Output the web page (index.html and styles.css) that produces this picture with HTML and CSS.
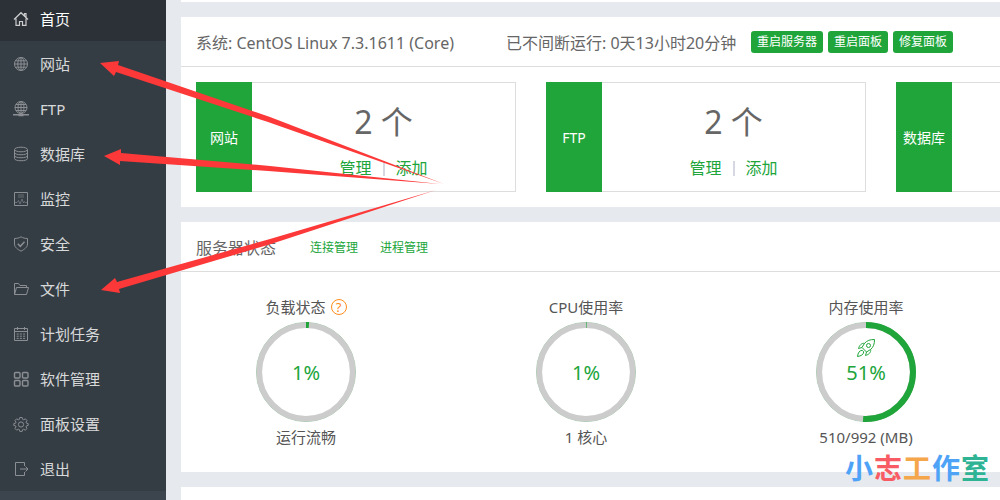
FILE: index.html
```html
<!DOCTYPE html>
<html lang="zh-CN">
<head>
  <meta charset="UTF-8">
  <meta name="viewport" content="width=device-width, initial-scale=1.0">
  <title>服务器面板</title>
  <link rel="stylesheet" href="styles.css">
</head>
<body>
  <aside class="sidebar">
    <nav class="menu">
      <a class="menu-item active" href="#">
        <svg class="icon" viewBox="0 0 16 16"><path d="M1 8.500L8 1.700l7 6.800M11.500 4.500V2.500H13V6M3 7.500v6.800h3.500V10.500h3v3.800H13V7.500"/></svg>
        首页
      </a>
      <a class="menu-item" href="#">
        <svg class="icon" viewBox="0 0 16 16"><circle cx="8" cy="8" r="6.500"/><ellipse cx="8" cy="8" rx="3.200" ry="6.500"/><path d="M8 1.500v13M1.500 8h13M2.500 4.800h11M2.500 11.200h11"/></svg>
        网站
      </a>
      <a class="menu-item" href="#">
        <svg class="icon" viewBox="0 0 16 16"><circle cx="8" cy="6.500" r="6"/><ellipse cx="8" cy="6.500" rx="3" ry="6"/><path d="M8 .5v13M2 6.500h12M3 3.500h10M3 9.500h10"/><path stroke-width="1.500" d="M0 13.700h16M5.500 14.500h5"/></svg>
        FTP
      </a>
      <a class="menu-item" href="#">
        <svg class="icon" viewBox="0 0 16 16"><ellipse cx="8" cy="3.500" rx="6.500" ry="2.300"/><path d="M1.500 3.500v9c0 3 13 3 13 0v-9M1.500 6.500c0 3 13 3 13 0M1.500 9.500c0 3 13 3 13 0"/></svg>
        数据库
      </a>
      <a class="menu-item" href="#">
        <svg class="icon" viewBox="0 0 16 16"><path d="M1.500 1.500h13v13h-13z"/><path opacity=".6" d="M5 4h6M5 6h6M2 11.500h2l1.500-2 1.500 3.500 2-5 1.500 4 1-1.500 1 1H14"/></svg>
        监控
      </a>
      <a class="menu-item" href="#">
        <svg class="icon" viewBox="0 0 16 16"><path d="M8 .8c2 1.200 4.200 1.700 6.500 1.700V8c0 3.500-3.500 5.500-6.500 7.200C5 13.500 1.500 11.500 1.500 8V2.500C3.800 2.500 6 2 8 .8z"/><path stroke-width="1.500" d="M4.800 7.800l2.500 2.500 4.200-4.500"/></svg>
        安全
      </a>
      <a class="menu-item" href="#">
        <svg class="icon" viewBox="0 0 16 16"><path d="M1.500 13.500v-11h4l1.500 2h6.500v2M1.500 13.500l2-7h12l-2 7z"/></svg>
        文件
      </a>
      <a class="menu-item" href="#">
        <svg class="icon" viewBox="0 0 16 16"><path d="M1.500 2.500h13v12h-13zM1.500 5.500h13M4.500 1v3M11.500 1v3"/><path stroke-dasharray="2 1.200" d="M3.700 8h9M3.700 10.200h9M3.700 12.400h9"/></svg>
        计划任务
      </a>
      <a class="menu-item" href="#">
        <svg class="icon" viewBox="0 0 16 16"><g stroke-width="1.400"><rect x="1.500" y="1.500" width="5.500" height="5.500" rx="1"/><rect x="9.500" y="1.500" width="5.500" height="5.500" rx="1"/><rect x="1.500" y="9.500" width="5.500" height="5.500" rx="1"/><rect x="9.500" y="9.500" width="5.500" height="5.500" rx="1"/></g></svg>
        软件管理
      </a>
      <a class="menu-item" href="#">
        <svg class="icon" viewBox="0 0 16 16"><path d="M6.800 1.500h2.400l.4 1.800 1.100.5 1.600-1 1.700 1.700-1 1.600.5 1.100 1.700.4v1.800l-1.700.4-.5 1.100 1 1.600-1.700 1.700-1.600-1-1.100.5-.4 1.700H6.800l-.4-1.700-1.100-.5-1.600 1L2 12.500l1-1.600-.5-1.100-1.700-.4V7.600l1.700-.4L3 6.100l-1-1.600 1.700-1.700 1.600 1 1.100-.5z"/><circle cx="8" cy="8.500" r="2.600"/></svg>
        面板设置
      </a>
      <a class="menu-item" href="#">
        <svg class="icon" viewBox="0 0 16 16"><path d="M11.500 5V1.500h-9v13h9V11M7 8h8M12.500 5.500L15 8l-2.500 2.500"/></svg>
        退出
      </a>
    </nav>
  </aside>

  <main class="main">
    <section class="panel panel-top"></section>

    <section class="panel">
      <div class="panel-head">
        <span class="system">系统: CentOS Linux 7.3.1611 (Core)</span>
        <span class="uptime">已不间断运行: 0天13小时20分钟</span>
        <div class="actions">
          <button class="btn">重启服务器</button>
          <button class="btn">重启面板</button>
          <button class="btn">修复面板</button>
        </div>
      </div>
      <div class="cards">
        <div class="card">
          <div class="card-name">网站</div>
          <div class="card-body">
            <div class="count">2 个</div>
            <div class="links"><a href="#">管理</a><i class="divider"></i><a href="#">添加</a></div>
          </div>
        </div>
        <div class="card">
          <div class="card-name">FTP</div>
          <div class="card-body">
            <div class="count">2 个</div>
            <div class="links"><a href="#">管理</a><i class="divider"></i><a href="#">添加</a></div>
          </div>
        </div>
        <div class="card">
          <div class="card-name">数据库</div>
          <div class="card-body"></div>
        </div>
      </div>
    </section>

    <section class="panel">
      <div class="panel-head">
        <span class="status-title">服务器状态</span>
        <a class="head-link" href="#">连接管理</a>
        <a class="head-link" href="#">进程管理</a>
      </div>
      <div class="gauges">
        <div class="gauge">
          <div class="gauge-title">负载状态 <span class="help">?</span></div>
          <div class="ring">
            <svg viewBox="0 0 100 100">
              <circle class="edge" cx="50" cy="50" r="49.500"/>
              <circle class="track" cx="50" cy="50" r="46.700"/>
              <circle class="value" cx="50" cy="50" r="47" pathLength="100" stroke-dasharray="1 99"/>
            </svg>
            <span class="percent">1%</span>
          </div>
          <div class="gauge-note">运行流畅</div>
        </div>
        <div class="gauge">
          <div class="gauge-title">CPU使用率</div>
          <div class="ring">
            <svg viewBox="0 0 100 100">
              <circle class="edge" cx="50" cy="50" r="49.500"/>
              <circle class="track" cx="50" cy="50" r="46.700"/>
              <circle class="value" cx="50" cy="50" r="47" pathLength="100" stroke-dasharray="0.200 99.800"/>
            </svg>
            <span class="percent">1%</span>
          </div>
          <div class="gauge-note">1 核心</div>
        </div>
        <div class="gauge">
          <div class="gauge-title">内存使用率</div>
          <div class="ring">
            <svg viewBox="0 0 100 100">
              <circle class="edge" cx="50" cy="50" r="49.500"/>
              <circle class="track" cx="50" cy="50" r="46.700"/>
              <circle class="value" cx="50" cy="50" r="47" pathLength="100" stroke-dasharray="51 49"/>
            </svg>
            <svg class="rocket" viewBox="0 0 20 20"><path d="M18.500 1.500c-4.500 0-7.500 1-10 3.800L6 9.500l4.500 4.500 4-2.500c3-2.500 4-5.500 4-10zM8.500 5.300C5.500 5 3.500 7.200 2.500 10.500L6 9.500M14.700 11.500c.3 3-1.700 5-5.200 6l1-3.500M6.200 12.300c-3 .2-4.200 2.700-4.700 6.200 3.500-.5 6-1.700 6.200-4.700z"/><circle cx="12.500" cy="7.500" r="2"/></svg>
            <span class="percent">51%</span>
          </div>
          <div class="gauge-note">510/992 (MB)</div>
        </div>
      </div>
    </section>

    <section class="panel panel-next"></section>
  </main>

  <!-- arrows pointing at the menu entries -->
  <svg class="arrows" width="1000" height="500" viewBox="0 0 1000 500">
    <polygon points="100,63 119,61 118,65 270,117 444,184 268,122 116,72 114,76"/>
    <polygon points="104,156 121,149 121,153 270,166 440,184 268,171 120,161 120,165"/>
    <polygon points="101,290 115,278 117,282 270,239 436,190 271,244 119,289 120,293"/>
  </svg>

  <div class="watermark">
    <span class="blue">小</span><span class="red">志</span><span class="orange">工</span><span class="blue">作</span><span class="teal">室</span>
  </div>
</body>
</html>
```
FILE: styles.css
```css
* {
  box-sizing: border-box;
}
body {
  margin: 0;
  display: flex;
  height: 100vh;
  overflow: hidden;
  position: relative;
  background: #e6e9ed;
  color: #555;
  font-family: "Noto Sans", "Noto Sans CJK SC", sans-serif;
  font-size: 15px;
}
a {
  color: #20a53a;
  text-decoration: none;
}

/* sidebar */
.sidebar {
  flex: 0 0 166px;
  background: #3c444d;
  overflow: hidden;
}
.menu {
  margin-top: -4px;
  background: #353d44;
}
.menu-item {
  display: flex;
  align-items: center;
  gap: 11px;
  height: 45px;
  padding-left: 13px;
  color: #d8d9da;
}
.menu-item.active {
  background: #2c3138;
  color: #fff;
}
.icon {
  width: 16px;
  height: 16px;
  fill: none;
  stroke: #8b8f93;
  stroke-width: 1;
}
.active .icon {
  stroke: #ccc;
  stroke-width: 1.2;
}

/* content */
.main {
  flex: 1;
  min-width: 0;
  display: flex;
  flex-direction: column;
  gap: 15px;
  padding-left: 15px;
  overflow: hidden;
}
.panel {
  flex: none;
  background: #fff;
  overflow: hidden;
}
.panel-top {
  height: 2px;
}
.panel-next {
  height: 60px;
}
.panel-head {
  display: flex;
  align-items: center;
  height: 50px;
  padding: 0 15px;
  border-bottom: 1px solid #ddd;
  font-size: 16px;
  color: #666;
  white-space: nowrap;
}
.system {
  width: 310px;
}
.uptime {
  width: 245px;
}
.actions {
  display: flex;
  gap: 5px;
}
.btn {
  height: 22px;
  padding: 0 6px;
  border: none;
  border-radius: 3px;
  background: #20a53a;
  color: #fff;
  font-family: inherit;
  font-size: 12px;
  line-height: 22px;
  cursor: pointer;
}
.btn:hover {
  background: #10952a;
}
.status-title {
  width: 114px;
}
.head-link {
  margin-right: 22px;
  font-size: 12px;
}

.cards {
  display: flex;
  gap: 30px;
  padding: 15px;
}
.card {
  flex: 0 0 320px;
  display: flex;
  height: 110px;
  border: 1px solid #ddd;
  border-left: none;
}
.card-name {
  display: flex;
  align-items: center;
  justify-content: center;
  width: 56px;
  margin: -1px 0;
  background: #20a53a;
  color: #fff;
  font-size: 14px;
}
.card-body {
  flex: 1;
  padding-top: 16px;
  text-align: center;
}
.count {
  font-size: 32px;
  line-height: 46px;
  color: #666;
}
.links {
  display: flex;
  align-items: center;
  justify-content: center;
  gap: 11px;
  font-size: 16px;
  line-height: 46px;
}
.divider {
  width: 2px;
  height: 15px;
  background: #d5d8e2;
}

/* gauges */
.gauges {
  display: flex;
  height: 200px;
  margin-left: -15px;
  padding-top: 22px;
}
.gauge {
  flex: 0 0 280px;
  display: flex;
  flex-direction: column;
  align-items: center;
}
.gauge-title {
  display: flex;
  align-items: center;
  gap: 5px;
  height: 28px;
  line-height: 28px;
  padding-bottom: 2px;
}
.gauge-note {
  line-height: 30px;
}
.help {
  width: 16px;
  height: 16px;
  border: 1px solid #ff8c1a;
  border-radius: 50%;
  color: #ff8c1a;
  font-size: 13px;
  line-height: 14px;
  text-align: center;
}
.ring {
  position: relative;
  display: flex;
  align-items: center;
  justify-content: center;
  width: 100px;
  height: 100px;
  color: #20a53a;
  font-size: 20px;
}
.ring svg {
  position: absolute;
  top: 0;
  left: 0;
  width: 100px;
  height: 100px;
  fill: none;
}
.ring .rocket {
  top: 16px;
  left: 40px;
  width: 20px;
  height: 20px;
  stroke: #20a53a;
  stroke-width: 1;
}
.edge {
  stroke: #9cc9a5;
  stroke-width: 1;
}
.track {
  stroke: #ccc;
  stroke-width: 5.6;
}
.value {
  stroke: #20a53a;
  stroke-width: 6;
  transform: rotate(-90deg);
  transform-origin: center;
}

/* overlays */
.arrows {
  position: absolute;
  top: 0;
  left: 0;
  fill: #fd3838;
  pointer-events: none;
}
.watermark {
  position: absolute;
  right: 11px;
  bottom: 12px;
  display: flex;
  gap: 1px;
  font-size: 28px;
  font-weight: 700;
  line-height: 40px;
}
.blue {
  color: #4fa3f7;
}
.red {
  color: #f85b63;
}
.orange {
  color: #f5a64b;
}
.teal {
  color: #2fb395;
}
```
